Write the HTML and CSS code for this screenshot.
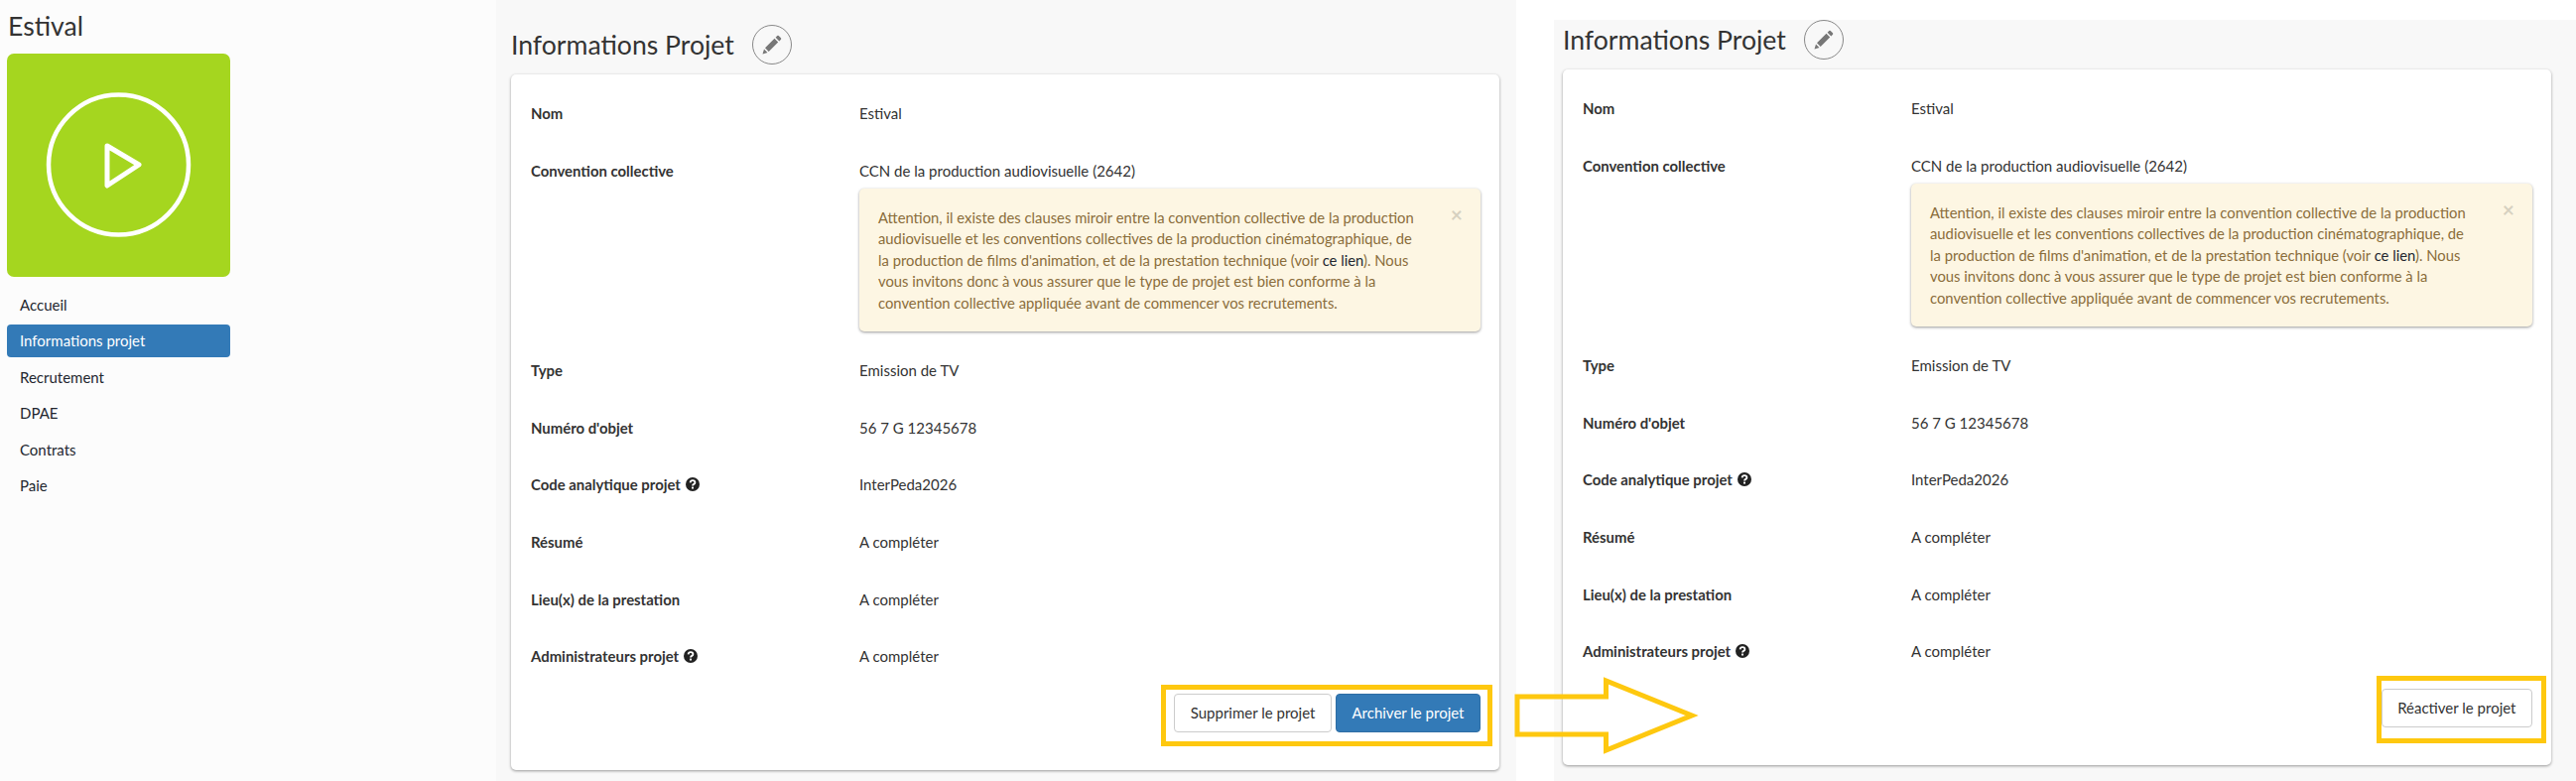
FILE: index.html
```html
<!DOCTYPE html>
<html lang="fr">
<head>
    <meta charset="UTF-8">
    <title>Informations Projet</title>
    <link rel="stylesheet" href="styles.css">
</head>
<body>
    <div class="page">
        <aside class="sidebar">
            <h2 class="project-name">Estival</h2>
            <div class="tile">
                <svg class="tile-icon" viewBox="0 0 225 225" fill="none" stroke="#fff">
                    <circle cx="112.5" cy="112" r="70.5" stroke-width="4.5"/>
                    <path d="M101 93 L133 112 L101 133 Z" stroke-width="5" stroke-linejoin="round"/>
                </svg>
            </div>
            <nav class="nav">
                <a class="nav-item">Accueil</a>
                <a class="nav-item active">Informations projet</a>
                <a class="nav-item">Recrutement</a>
                <a class="nav-item">DPAE</a>
                <a class="nav-item">Contrats</a>
                <a class="nav-item">Paie</a>
            </nav>
        </aside>

        <section class="panel panel-first">
            <div class="panel-head">
                <h2 class="panel-title">Informations Projet</h2>
                <span class="edit">
                    <svg viewBox="0 0 20 20" width="20" height="20" fill="#777"><path d="M0.5 19.5 L2 14.5 L5.5 18 Z M3 13.3 L12.5 3.8 L16.2 7.5 L6.7 17 Z M13.6 2.7 L15.3 1 Q16 .4 16.7 1 L19 3.3 Q19.6 4 19 4.7 L17.3 6.4 Z"/></svg>
                </span>
            </div>
            <div class="card">
                <div class="rows">
                    <div class="row"><div class="label">Nom</div><div class="value">Estival</div></div>
                    <div class="row">
                        <div class="label">Convention collective</div>
                        <div class="value">
                            <div>CCN de la production audiovisuelle (2642)</div>
                            <div class="alert">
                                <span class="alert-close">×</span>
                                <p class="alert-text">Attention, il existe des clauses miroir entre la convention collective de la production audiovisuelle et les conventions collectives de la production cinématographique, de la production de films d'animation, et de la prestation technique (voir <a class="alert-link">ce lien</a>). Nous vous invitons donc à vous assurer que le type de projet est bien conforme à la convention collective appliquée avant de commencer vos recrutements.</p>
                            </div>
                        </div>
                    </div>
                    <div class="row"><div class="label">Type</div><div class="value">Emission de TV</div></div>
                    <div class="row"><div class="label">Numéro d'objet</div><div class="value">56 7 G 12345678</div></div>
                    <div class="row">
                        <div class="label">Code analytique projet
                            <svg class="help" viewBox="0 0 14 14"><circle cx="7" cy="7" r="7" fill="#222"/><path d="M4.6 5.4 Q4.8 3.2 7 3.2 Q9.4 3.2 9.4 5.2 Q9.4 6.3 8.2 6.9 Q7 7.5 7 8.6" fill="none" stroke="#fff" stroke-width="1.8"/><rect x="6" y="9.6" width="2" height="1.9" fill="#fff"/></svg>
                        </div>
                        <div class="value">InterPeda2026</div>
                    </div>
                    <div class="row"><div class="label">Résumé</div><div class="value">A compléter</div></div>
                    <div class="row"><div class="label">Lieu(x) de la prestation</div><div class="value">A compléter</div></div>
                    <div class="row">
                        <div class="label">Administrateurs projet
                            <svg class="help" viewBox="0 0 14 14"><circle cx="7" cy="7" r="7" fill="#222"/><path d="M4.6 5.4 Q4.8 3.2 7 3.2 Q9.4 3.2 9.4 5.2 Q9.4 6.3 8.2 6.9 Q7 7.5 7 8.6" fill="none" stroke="#fff" stroke-width="1.8"/><rect x="6" y="9.6" width="2" height="1.9" fill="#fff"/></svg>
                        </div>
                        <div class="value">A compléter</div>
                    </div>
                </div>
                <div class="actions">
                    <a class="btn">Supprimer le projet</a>
                    <a class="btn btn-primary">Archiver le projet</a>
                </div>
            </div>
        </section>

        <div class="divider"></div>

        <section class="panel panel-second">
            <div class="panel-head">
                <h2 class="panel-title">Informations Projet</h2>
                <span class="edit">
                    <svg viewBox="0 0 20 20" width="20" height="20" fill="#777"><path d="M0.5 19.5 L2 14.5 L5.5 18 Z M3 13.3 L12.5 3.8 L16.2 7.5 L6.7 17 Z M13.6 2.7 L15.3 1 Q16 .4 16.7 1 L19 3.3 Q19.6 4 19 4.7 L17.3 6.4 Z"/></svg>
                </span>
            </div>
            <div class="card">
                <div class="rows">
                    <div class="row"><div class="label">Nom</div><div class="value">Estival</div></div>
                    <div class="row">
                        <div class="label">Convention collective</div>
                        <div class="value">
                            <div>CCN de la production audiovisuelle (2642)</div>
                            <div class="alert">
                                <span class="alert-close">×</span>
                                <p class="alert-text">Attention, il existe des clauses miroir entre la convention collective de la production audiovisuelle et les conventions collectives de la production cinématographique, de la production de films d'animation, et de la prestation technique (voir <a class="alert-link">ce lien</a>). Nous vous invitons donc à vous assurer que le type de projet est bien conforme à la convention collective appliquée avant de commencer vos recrutements.</p>
                            </div>
                        </div>
                    </div>
                    <div class="row"><div class="label">Type</div><div class="value">Emission de TV</div></div>
                    <div class="row"><div class="label">Numéro d'objet</div><div class="value">56 7 G 12345678</div></div>
                    <div class="row">
                        <div class="label">Code analytique projet
                            <svg class="help" viewBox="0 0 14 14"><circle cx="7" cy="7" r="7" fill="#222"/><path d="M4.6 5.4 Q4.8 3.2 7 3.2 Q9.4 3.2 9.4 5.2 Q9.4 6.3 8.2 6.9 Q7 7.5 7 8.6" fill="none" stroke="#fff" stroke-width="1.8"/><rect x="6" y="9.6" width="2" height="1.9" fill="#fff"/></svg>
                        </div>
                        <div class="value">InterPeda2026</div>
                    </div>
                    <div class="row"><div class="label">Résumé</div><div class="value">A compléter</div></div>
                    <div class="row"><div class="label">Lieu(x) de la prestation</div><div class="value">A compléter</div></div>
                    <div class="row">
                        <div class="label">Administrateurs projet
                            <svg class="help" viewBox="0 0 14 14"><circle cx="7" cy="7" r="7" fill="#222"/><path d="M4.6 5.4 Q4.8 3.2 7 3.2 Q9.4 3.2 9.4 5.2 Q9.4 6.3 8.2 6.9 Q7 7.5 7 8.6" fill="none" stroke="#fff" stroke-width="1.8"/><rect x="6" y="9.6" width="2" height="1.9" fill="#fff"/></svg>
                        </div>
                        <div class="value">A compléter</div>
                    </div>
                </div>
                <div class="actions">
                    <a class="btn">Réactiver le projet</a>
                </div>
            </div>
        </section>

        <!-- annotations drawn over the screenshots -->
        <div class="frame frame-left"></div>
        <div class="frame frame-right"></div>
        <svg class="arrow" viewBox="0 0 190 80" fill="none" stroke="#fec80f" stroke-width="5">
            <path d="M3 21 H92.500 V5 L179 40 L92.500 75 V59 H3 Z"/>
        </svg>
    </div>
</body>
</html>
```

FILE: styles.css
```css
body {
    margin: 0;
    background: #fff;
    color: #333;
    font-family: 'Lato', sans-serif;
    font-size: 15px;
    line-height: 20px;
}
.page {
    position: relative;
    display: flex;
    width: 2596px;
    height: 787px;
    overflow: hidden;
}

/* sidebar */
.sidebar {
    width: 500px;
    box-sizing: border-box;
    padding: 0 268px 0 7px;
    background: #fcfcfc;
}
.project-name {
    margin: 0;
    height: 54px;
    padding-left: 1px;
    font-size: 26.6px;
    font-weight: 400;
    line-height: 52px;
}
.tile {
    height: 225px;
    background: #a5d61f;
    border-radius: 7px;
}
.tile-icon {
    display: block;
    width: 225px;
    height: 225px;
}
.nav {
    display: flex;
    flex-direction: column;
    gap: 3.5px;
    margin-top: 11.5px;
}
.nav-item {
    height: 33px;
    padding-left: 13px;
    border-radius: 4px;
    color: #23272f;
    line-height: 33px;
}
.nav-item.active {
    background: #337ab7;
    color: #fff;
}

/* panels */
.panel {
    background: #f8f8f8;
}
.panel-first {
    width: 1028px;
    box-sizing: border-box;
    padding: 25px 0 0 15px;
}
.divider {
    width: 38px;
}
.panel-second {
    width: 1030px;
    box-sizing: border-box;
    margin-top: 20px;
    padding-left: 9px;
}
.panel-head {
    display: flex;
    align-items: center;
    gap: 18px;
    height: 40px;
    margin-bottom: 10px;
}
.panel-title {
    margin: 0;
    font-size: 26.6px;
    font-weight: 400;
}
.edit {
    display: flex;
    justify-content: center;
    align-items: center;
    width: 40px;
    height: 40px;
    box-sizing: border-box;
    border: 1px solid #888;
    border-radius: 50%;
}
.card {
    width: 996px;
    height: 701px;
    box-sizing: border-box;
    padding: 29px 19px 0 20px;
    background: #fff;
    border-radius: 5px;
    box-shadow: 0 1px 3px rgba(0,0,0,0.4);
}
.rows {
    display: flex;
    flex-direction: column;
    gap: 28.7px;
}
.row {
    display: flex;
    min-height: 29px;
}
.label {
    width: 331px;
    flex: none;
    font-weight: 700;
    font-size: 14.9px;
}
.value {
    flex: 1;
}
.help {
    width: 14px;
    height: 14px;
    margin-left: 1px;
    vertical-align: -1px;
}
.alert {
    position: relative;
    margin-top: 8px;
    padding: 19px 60px 18px 19px;
    background: #fdf6e3;
    border-radius: 5px;
    box-shadow: 0 1px 3px rgba(0,0,0,0.4);
    color: #8a6d3b;
}
.alert-text {
    margin: 0;
    font-size: 14.8px;
    line-height: 21.5px;
}
.alert-link {
    color: #23272f;
}
.alert-close {
    position: absolute;
    top: 16px;
    right: 18px;
    font-size: 21px;
    font-weight: 700;
    color: #000;
    opacity: 0.15;
}
.actions {
    display: flex;
    justify-content: flex-end;
    gap: 4px;
    margin-top: 19px;
}
.btn {
    height: 39px;
    box-sizing: border-box;
    padding: 0 15.5px;
    border: 1px solid #ccc;
    border-radius: 4px;
    background: #fff;
    line-height: 37px;
}
.btn-primary {
    background: #337ab7;
    border-color: #2e6da4;
    color: #fff;
}

/* yellow annotations */
.frame {
    position: absolute;
    box-sizing: border-box;
    border: 5px solid #fec80f;
}
.frame-left {
    left: 1170px;
    top: 690px;
    width: 334px;
    height: 62px;
}
.frame-right {
    left: 2395px;
    top: 681px;
    width: 171px;
    height: 68px;
}
.arrow {
    position: absolute;
    left: 1526px;
    top: 681px;
    width: 190px;
    height: 80px;
}
```
